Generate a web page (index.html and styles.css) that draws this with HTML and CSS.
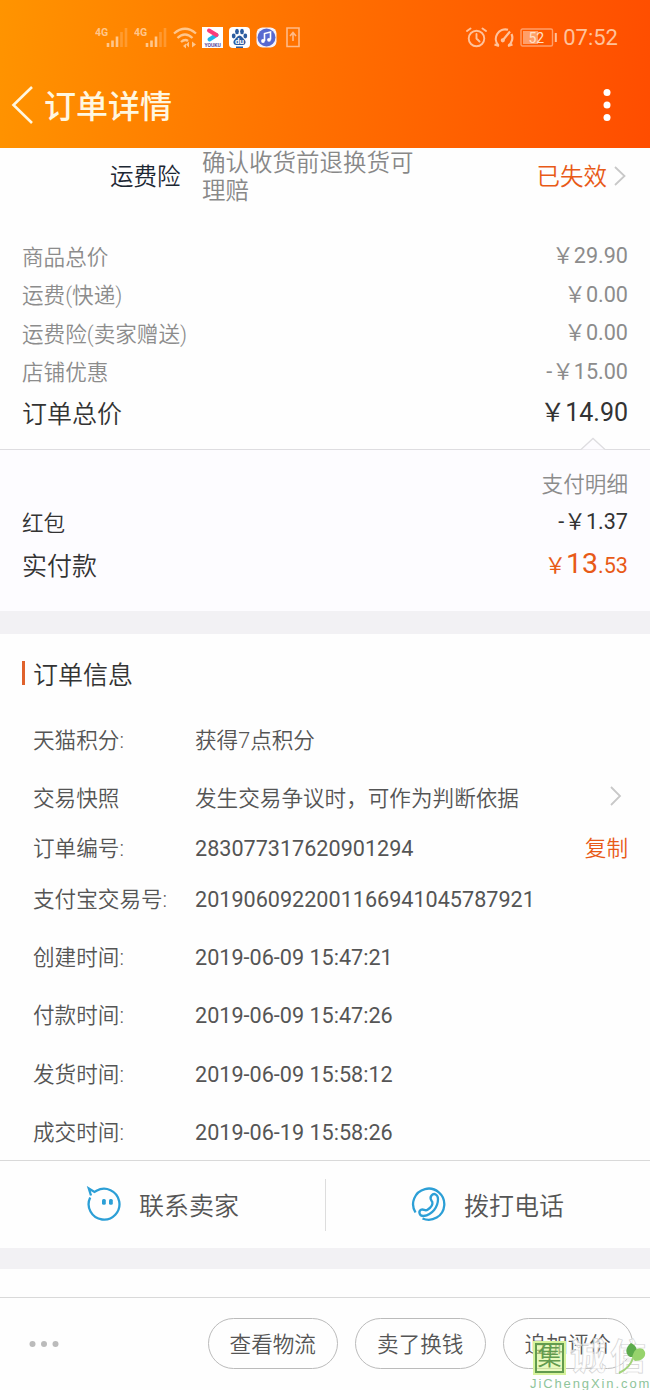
FILE: index.html
```html
<!DOCTYPE html>
<html lang="zh-CN">
<head>
    <meta charset="UTF-8">
    <title>订单详情</title>
    <link rel="stylesheet" href="styles.css">
</head>
<body>
<div class="page">
    <header class="header">
        <div class="status">
            <div class="status-left">
                <svg width="33" height="24" viewBox="0 0 33 24">
                    <text x="0" y="10" class="net">4G</text>
                    <path d="M13 17v4M17.500 14.500v6.500M22 10.500v10.500" class="bar"/>
                    <path d="M26.500 6v15M31 2v19" class="bar dim"/>
                </svg>
                <svg width="33" height="24" viewBox="0 0 33 24">
                    <text x="0" y="10" class="net">4G</text>
                    <path d="M13 17v4M17.500 14.500v6.500M22 10.500v10.500" class="bar"/>
                    <path d="M26.500 6v15M31 2v19" class="bar dim"/>
                </svg>
                <svg width="24" height="24" viewBox="0 0 24 24">
                    <g fill="none" stroke="#ffc68b" stroke-width="2.300">
                        <path d="M1 7.500Q12 -2 23 7.500"/>
                        <path d="M4.500 12Q12 5 19.500 12"/>
                        <path d="M8 16Q12 12.500 15 15"/>
                    </g>
                    <path d="M10 20l3-2.500v5zM16 15.500v6l-3-3zM19 15.500v6l4-3z" fill="#ffc68b"/>
                </svg>
                <svg class="app" width="21" height="21" viewBox="0 0 21 21">
                    <rect width="21" height="21" fill="#fff"/>
                    <path d="M14.500 8l-7 4.500" stroke="#22b5e8" stroke-width="4" stroke-linecap="round"/>
                    <path d="M7 3.500l7.500 4.500" stroke="#fb3d7a" stroke-width="4" stroke-linecap="round"/>
                    <text x="2.500" y="19.500" class="youku">YOUKU</text>
                </svg>
                <svg class="app" width="21" height="21" viewBox="0 0 21 21">
                    <rect width="21" height="21" rx="4" fill="#fff"/>
                    <g fill="#2b5c9f">
                        <ellipse cx="8" cy="4.500" rx="1.900" ry="2.700"/>
                        <ellipse cx="13" cy="4.500" rx="1.900" ry="2.700"/>
                        <ellipse cx="4.700" cy="9" rx="1.900" ry="2.400"/>
                        <ellipse cx="16.300" cy="9" rx="1.900" ry="2.400"/>
                        <path d="M10.500 8.500c2.200 0 3 2.500 5 4.300 2 2 1 5.200-1.500 5.200H7c-2.500 0-3.500-3.200-1.500-5.200 2-1.800 2.800-4.300 5-4.300z"/>
                        <rect x="7" y="19.500" width="7" height="1.500"/>
                    </g>
                    <text x="6" y="16.500" class="du">du</text>
                </svg>
                <svg class="app" width="21" height="21" viewBox="0 0 21 21">
                    <rect x=".5" y=".5" width="20" height="20" rx="6" fill="#f5f2fb"/>
                    <circle cx="10.500" cy="10.500" r="9" fill="#5869d0"/>
                    <path d="M8.500 14V6.500l6-1.500v7.500" fill="none" stroke="#fff" stroke-width="1.600"/>
                    <circle cx="7" cy="14" r="1.900" fill="#fff"/>
                    <circle cx="13" cy="12.800" r="1.900" fill="#fff"/>
                </svg>
                <svg class="upload" width="14" height="21" viewBox="0 0 14 21">
                    <g fill="none" stroke="#ffba88" stroke-width="1.600">
                        <path d="M1 1h12v18.500H1z"/>
                        <path d="M7 14V6M4 9l3-3.500L10 9"/>
                    </g>
                </svg>
            </div>
            <div class="status-right">
                <svg width="21" height="21" viewBox="0 0 21 21">
                    <g fill="none" stroke="#ffc29b" stroke-width="1.900" stroke-linecap="round">
                        <circle cx="10.500" cy="11.500" r="7.800"/>
                        <path d="M1 4l3.500-2.500M20 4l-3.500-2.500M10.500 7v4.500l3 3"/>
                    </g>
                </svg>
                <svg width="23" height="21" viewBox="0 0 23 21">
                    <g fill="none" stroke="#ffc29b" stroke-width="2.200">
                        <path d="M6.500 18.500A9.500 9.500 0 0 1 16 2.800M19.500 7A9.500 9.500 0 0 1 16.500 18.500M2.500 17.500L7 19M20.500 17.500L16 19M11 13L18 4.500"/>
                        <circle cx="10.800" cy="13.300" r="1"/>
                    </g>
                </svg>
                <svg width="38" height="19" viewBox="0 0 38 19">
                    <rect x="1" y="1" width="31.500" height="17" rx="1.500" fill="none" stroke="#ff9f69" stroke-width="1.400"/>
                    <rect x="3" y="3" width="15" height="13" fill="#ff9f69"/>
                    <path d="M35.800 5v9" stroke="#ffc29b" stroke-width="2"/>
                    <text x="8.500" y="14.500" class="level">52</text>
                </svg>
                <span class="clock">07:52</span>
            </div>
        </div>
        <div class="navbar">
            <svg width="24" height="40" viewBox="0 0 24 40">
                <path d="M21 2L2.500 20L21 38" fill="none" stroke="#fff7e0" stroke-width="2.600"/>
            </svg>
            <h1>订单详情</h1>
            <svg class="more" width="8" height="34" viewBox="0 0 8 34" fill="#fff">
                <circle cx="4" cy="4.500" r="3.500"/>
                <circle cx="4" cy="17" r="3.500"/>
                <circle cx="4" cy="29.500" r="3.500"/>
            </svg>
        </div>
    </header>

    <section class="insurance">
        <span class="name">运费险</span>
        <p class="desc">确认收货前退换货可理赔</p>
        <span class="state">已失效</span>
        <svg width="14" height="22" viewBox="0 0 14 22">
            <path d="M2 2l9.500 9L2 20" fill="none" stroke="#c8c8c8" stroke-width="1.800"/>
        </svg>
    </section>

    <section class="prices">
        <div class="price"><span>商品总价</span><span class="num">￥29.90</span></div>
        <div class="price"><span>运费(快递)</span><span class="num">￥0.00</span></div>
        <div class="price"><span>运费险(卖家赠送)</span><span class="num">￥0.00</span></div>
        <div class="price"><span>店铺优惠</span><span class="num">-￥15.00</span></div>
        <div class="price total"><span>订单总价</span><span class="num">￥14.90</span></div>
    </section>

    <section class="payment">
        <svg class="caret" width="26" height="13" viewBox="0 0 26 13">
            <path d="M1 12.500L13 1.500L25 12.500" fill="#fdfcff" stroke="#dedde0" stroke-width="1.300"/>
        </svg>
        <div class="detail">支付明细</div>
        <div class="pay"><span>红包</span><span class="num">-￥1.37</span></div>
        <div class="pay actual"><span>实付款</span><span class="num">￥<b>13</b>.53</span></div>
    </section>

    <section class="info">
        <h2>订单信息</h2>
        <div class="row"><span class="key">天猫积分:</span><span class="text">获得7点积分</span></div>
        <div class="row">
            <span class="key">交易快照</span><span class="text">发生交易争议时，可作为判断依据</span>
            <svg class="end" width="14" height="22" viewBox="0 0 14 22">
                <path d="M2 2l9 9L2 20" fill="none" stroke="#c8c8c8" stroke-width="1.800"/>
            </svg>
        </div>
        <div class="row number"><span class="key">订单编号:</span><span class="value">283077317620901294</span><a class="end copy">复制</a></div>
        <div class="row alipay"><span class="key">支付宝交易号:</span><span class="value">2019060922001166941045787921</span></div>
        <div class="row created"><span class="key">创建时间:</span><span class="value">2019-06-09 15:47:21</span></div>
        <div class="row paid"><span class="key">付款时间:</span><span class="value">2019-06-09 15:47:26</span></div>
        <div class="row"><span class="key">发货时间:</span><span class="value">2019-06-09 15:58:12</span></div>
        <div class="row"><span class="key">成交时间:</span><span class="value">2019-06-19 15:58:26</span></div>
    </section>

    <section class="contact">
        <div class="way">
            <svg width="36" height="36" viewBox="0 0 36 36">
                <path d="M4.200 11.500A15.400 15.400 0 1 0 10.500 4.800L8.500 6L2.800 2.500L5 9.500" fill="none" stroke="#2c9fd6" stroke-width="2.300"/>
                <rect x="16" y="13" width="3.800" height="5.800" rx="1.500" fill="#2c9fd6"/>
                <rect x="23" y="13" width="3.800" height="5.800" rx="1.500" fill="#2c9fd6"/>
            </svg>
            <span>联系卖家</span>
        </div>
        <div class="way">
            <svg width="36" height="36" viewBox="0 0 36 36" fill="none" stroke="#2c9fd6" stroke-width="2.300">
                <path d="M4.500 26.500A15.600 15.600 0 1 1 11.500 32.500"/>
                <path d="M20.500 9.500C23 6.500 27 8.500 27 13C27 21 21.500 28.500 12.500 30C8.500 30 7 25.500 10 23.800C12.500 22.500 14 25.500 16.500 23.800C19.500 21.800 22 18.500 21.300 16C20.500 14.500 18 12.500 20.500 9.500z"/>
            </svg>
            <span>拨打电话</span>
        </div>
    </section>

    <footer class="footer">
        <svg class="dots" width="30" height="8" viewBox="0 0 30 8" fill="#bbb">
            <circle cx="3.500" cy="4" r="3"/>
            <circle cx="15" cy="4" r="3"/>
            <circle cx="26.500" cy="4" r="3"/>
        </svg>
        <button>查看物流</button>
        <button>卖了换钱</button>
        <button>追加评价</button>
    </footer>

    <div class="watermark">
        <div class="brand">
            <span class="seal">集</span>
            <span class="outline">诚信</span>
            <svg class="leaf" width="30" height="32" viewBox="0 0 30 32">
                <path d="M13 15C7 11 9 5 14 1C20 4 22 9 17 15z" fill="#5cab4c"/>
                <path d="M15 16C17 7 21 5 26 7C31 12 27 19 18 19z" fill="#97d36c"/>
                <path d="M16 16Q13 26 2 31" fill="none" stroke="#a3d37c" stroke-width="2"/>
            </svg>
        </div>
        <div class="site">JiChengXin.com</div>
    </div>
</div>
</body>
</html>
```
FILE: styles.css
```css
* {
    box-sizing: border-box;
}

body {
    margin: 0;
    background: #fefefe;
    font-family: Roboto, "Noto Sans CJK SC", sans-serif;
    font-size: 21.6px;
    font-weight: 350;
    color: #555;
}

svg {
    display: block;
    flex: none;
}

h1, h2, p {
    margin: 0;
}

.page {
    position: relative;
    width: 650px;
    height: 1390px;
    overflow: hidden;
}

.header {
    height: 148px;
    background: linear-gradient(97deg, #ff9400 0%, #ff7000 48%, #ff4d00 100%);
}

.status {
    display: flex;
    justify-content: space-between;
    align-items: center;
    height: 75px;
    padding: 0 32px 0 95px;
}

.status-left, .status-right {
    display: flex;
    align-items: center;
    gap: 6px;
}

.status-right {
    gap: 5px;
}

.app {
    margin-left: -1px;
    margin-right: 1px;
}

.upload {
    margin-left: 2px;
}

.net {
    font: bold 10.500px "Roboto", sans-serif;
    fill: #ffc68b;
}

.bar {
    stroke: #ffc68b;
    stroke-width: 2.6;
}

.dim {
    opacity: 0.35;
}

.youku {
    font: bold 5px "Roboto", sans-serif;
    fill: #5b4a9b;
}

.du {
    font: bold 8px "Roboto", sans-serif;
    fill: #fff;
}

.level {
    font: 14px "Roboto", sans-serif;
    fill: #ffe0c8;
}

.clock {
    font-size: 22px;
    font-weight: 400;
    color: #ffc29b;
}

.navbar {
    display: flex;
    align-items: center;
    height: 60px;
    padding: 0 39px 0 11px;
}

h1 {
    margin-left: 9px;
    padding-bottom: 2px;
    font-size: 32px;
    font-weight: 500;
    color: #fff7e0;
}

.more {
    margin-left: auto;
}

.insurance {
    display: flex;
    align-items: center;
    height: 56px;
    padding: 0 23px 0 110px;
    font-size: 23.500px;
}

.name {
    width: 92px;
    padding-bottom: 2px;
    color: #1c2733;
}

.desc {
    width: 220px;
    padding-top: 1px;
    line-height: 28px;
    color: #888;
}

.state {
    margin-left: auto;
    margin-right: 6px;
    padding-bottom: 2px;
    color: #e85a17;
}

.prices {
    height: 245px;
    padding: 32px 22px 0;
}

.price {
    display: flex;
    justify-content: space-between;
    align-items: center;
    height: 38.500px;
    color: #8c8c8c;
}

.num {
    padding-bottom: 3px;
    font-weight: 400;
}

.total {
    height: 43px;
    font-size: 25px;
    color: #333;
}

.payment {
    position: relative;
    height: 185px;
    padding: 16px 22px 0;
    background: #fdfcff;
    border-top: 1px solid #dedde0;
    border-bottom: 23px solid #f2f1f4;
    color: #333;
}

.caret {
    position: absolute;
    right: 44px;
    top: -13px;
}

.detail {
    height: 36px;
    line-height: 37px;
    text-align: right;
    color: #8c8c8c;
}

.pay {
    display: flex;
    justify-content: space-between;
    align-items: center;
    height: 38px;
}

.actual {
    height: 48px;
    font-size: 25px;
}

.actual .num {
    padding-bottom: 2px;
    font-size: 21.6px;
    color: #e85a17;
}

.actual b {
    font-size: 28.500px;
    font-weight: 400;
}

.info {
    height: 526px;
    padding: 26px 22px 0;
}

h2 {
    display: flex;
    align-items: center;
    gap: 8px;
    height: 26px;
    margin-bottom: 25px;
    font-size: 25px;
    font-weight: 350;
    color: #333;
}

h2::before {
    content: "";
    width: 3px;
    height: 24px;
    background: #e0622c;
}

.row {
    display: flex;
    align-items: center;
    height: 58px;
    padding-left: 11px;
}

.number {
    height: 42px;
}

.alipay {
    height: 60px;
}

.created {
    height: 56px;
}

.paid {
    height: 60px;
}

.key {
    width: 162px;
}

.key, .text, .copy {
    padding-bottom: 4px;
}

.value {
    font-weight: 400;
}

.end {
    margin-left: auto;
}

svg.end {
    margin-right: 5px;
    margin-bottom: 4px;
}

.copy {
    color: #e85a17;
}

.contact {
    display: flex;
    align-items: center;
    height: 109px;
    border-top: 1px solid #d9d9d9;
    border-bottom: 21px solid #f2f1f4;
}

.way {
    display: flex;
    align-items: center;
    gap: 17px;
    flex: 1;
    height: 52px;
    padding: 0 0 2px 86px;
    font-size: 25px;
}

.way + .way {
    padding-left: 85px;
    border-left: 1px solid #ddd;
}

.footer {
    display: flex;
    align-items: center;
    gap: 17px;
    height: 93px;
    margin-top: 28px;
    padding: 0 17px 1px 29px;
    border-top: 1px solid #d9d9d9;
}

.dots {
    margin-right: auto;
}

button {
    width: 130.500px;
    height: 51px;
    padding: 0 0 3px;
    border: 1px solid #bbb;
    border-radius: 26px;
    background: none;
    font: inherit;
    color: #555;
}

/* site mark over the bottom right corner */
.watermark {
    position: absolute;
    right: 0;
    top: 1341px;
    width: 120px;
}

.brand {
    display: flex;
    align-items: center;
    height: 34px;
    padding-left: 5px;
}

.seal {
    width: 30px;
    height: 30px;
    border: 2px solid #629b4e;
    outline: 2px solid #d6f29b;
    background: rgba(215, 245, 145, 0.6);
    font-size: 24px;
    font-weight: 400;
    line-height: 24px;
    text-align: center;
    color: #629b4e;
}

.outline {
    margin-left: 6px;
    font-size: 36px;
    font-weight: 700;
    line-height: 34px;
    letter-spacing: 4px;
    white-space: nowrap;
    color: rgba(255, 255, 255, 0.75);
    -webkit-text-stroke: 0.7px #d3d3d3;
}

.leaf {
    position: absolute;
    right: 3px;
    top: 1px;
}

.site {
    padding-top: 1px;
    font: 13px/16px "Liberation Sans", sans-serif;
    letter-spacing: 1.9px;
    white-space: nowrap;
    color: #8fc49a;
}
```
